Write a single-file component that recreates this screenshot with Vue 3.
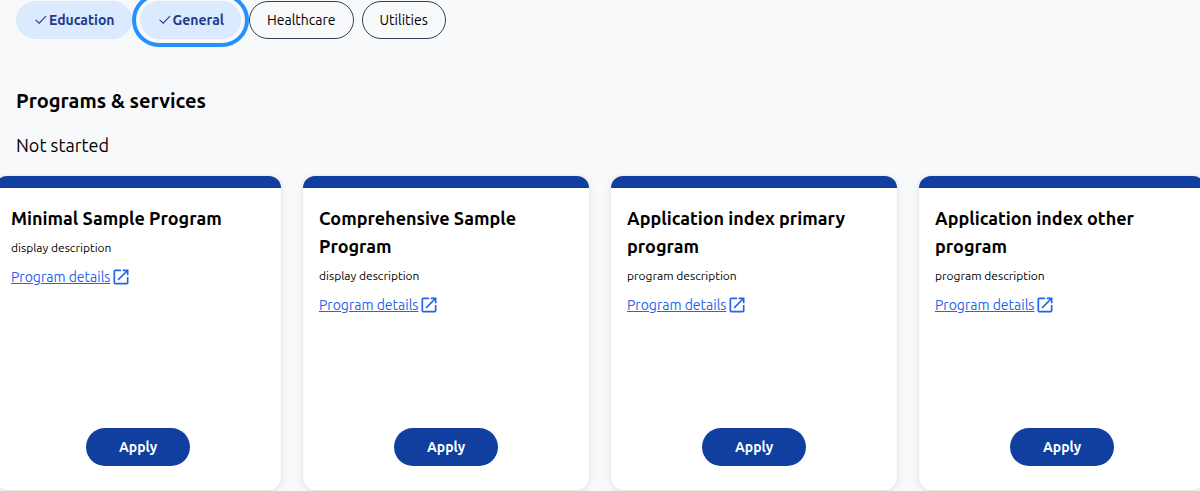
<script setup>
import { ref } from 'vue'

const categories = ref([
  { name: 'Education', selected: true },
  { name: 'General', selected: true },
  { name: 'Healthcare', selected: false },
  { name: 'Utilities', selected: false }
])
const focused = ref('General')

const programs = [
  { title: 'Minimal Sample Program', description: 'display description' },
  { title: 'Comprehensive Sample Program', description: 'display description' },
  { title: 'Application index primary program', description: 'program description' },
  { title: 'Application index other program', description: 'program description' }
]
</script>

<template>
  <main class="page">
    <div class="filters">
      <button
        v-for="category in categories"
        :key="category.name"
        type="button"
        class="chip"
        :class="{ selected: category.selected, focused: category.name === focused }"
        :aria-pressed="category.selected"
        @click="category.selected = !category.selected"
        @focus="focused = category.name"
      >
        <svg v-if="category.selected" class="check" viewBox="0 0 16 16" aria-hidden="true">
          <path d="M2.6 7.8 6.2 11.2 13 4.2" fill="none" stroke="currentColor" stroke-width="1.1" />
        </svg>
        <span>{{ category.name }}</span>
      </button>
    </div>
    <h2 class="heading">Programs &amp; services</h2>
    <h3 class="status">Not started</h3>
    <ul class="cards">
      <li v-for="program in programs" :key="program.title" class="card">
        <div class="body">
          <h4 class="title">{{ program.title }}</h4>
          <p class="description">{{ program.description }}</p>
          <a class="details" href="#">
            <span>Program details</span>
            <svg class="external" viewBox="0 0 24 24" aria-hidden="true">
              <path
                fill="currentColor"
                d="M19 19H5V5h7V3H5a2 2 0 0 0-2 2v14a2 2 0 0 0 2 2h14c1.1 0 2-.9 2-2v-7h-2v7zM14 3v2h3.59l-9.83 9.83 1.41 1.41L19 6.41V10h2V3h-7z"
              />
            </svg>
          </a>
        </div>
        <button type="button" class="apply">Apply</button>
      </li>
    </ul>
  </main>
</template>

<style>
body {
  margin: 0;
  background: #f8f9fb;
}
</style>

<style scoped>
.page {
  overflow: hidden;
  padding-top: 1px;
  padding-bottom: 1px;
  color: #000;
  background: #f8f9fb;
  font-family: Ubuntu, "Noto Sans", sans-serif;
  font-size: 14px;
  line-height: 20px;
}

.filters {
  display: flex;
  gap: 8px;
  padding: 0 16px;
}

.chip {
  display: flex;
  align-items: center;
  box-sizing: border-box;
  height: 38px;
  padding: 0 17px;
  border: 1px solid #334155;
  border-radius: 19px;
  background: transparent;
  color: #000;
  font: inherit;
  cursor: pointer;
}

.chip.selected {
  padding: 0 16px;
  border-color: #dbeafe;
  background: #dbeafe;
  color: #1e3a8a;
  font-weight: 700;
}

.chip.focused {
  outline: 4px solid #2491ff;
  outline-offset: 4px;
}

.check {
  width: 16px;
  height: 16px;
}

.heading {
  margin: 48px 16px 0;
  font-size: 20px;
  line-height: 28px;
  font-weight: 700;
}

.status {
  margin: 16px 16px 0;
  font-size: 18px;
  line-height: 28px;
  font-weight: 400;
}

.cards {
  display: grid;
  grid-template-columns: repeat(4, 1fr);
  gap: 22px;
  margin: 17px -5px 0;
  padding: 0;
  list-style: none;
}

.card {
  display: flex;
  flex-direction: column;
  box-sizing: border-box;
  min-height: 314px;
  padding-bottom: 24px;
  border-top: 12px solid #113f9f;
  border-radius: 12px;
  background: #fff;
  box-shadow: 0 0 2px rgba(0, 0, 0, 0.1), 0 2px 8px rgba(0, 0, 0, 0.08);
}

.body {
  flex: 1;
  padding: 16px;
}

.title {
  margin: 0;
  font-size: 18px;
  line-height: 28px;
  font-weight: 700;
}

.description {
  margin: 7px 0 0;
  font-size: 12px;
  line-height: 18px;
}

.details {
  display: inline-flex;
  align-items: center;
  gap: 1px;
  margin-top: 10px;
  color: #2563eb;
  text-decoration: none;
}

.details span {
  text-decoration: underline;
}

.external {
  width: 20px;
  height: 20px;
}

.apply {
  align-self: center;
  box-sizing: border-box;
  width: 104px;
  height: 38px;
  padding: 0;
  border: 0;
  border-radius: 19px;
  background: #113f9f;
  color: #fff;
  font: inherit;
  font-weight: 700;
  cursor: pointer;
}
</style>
